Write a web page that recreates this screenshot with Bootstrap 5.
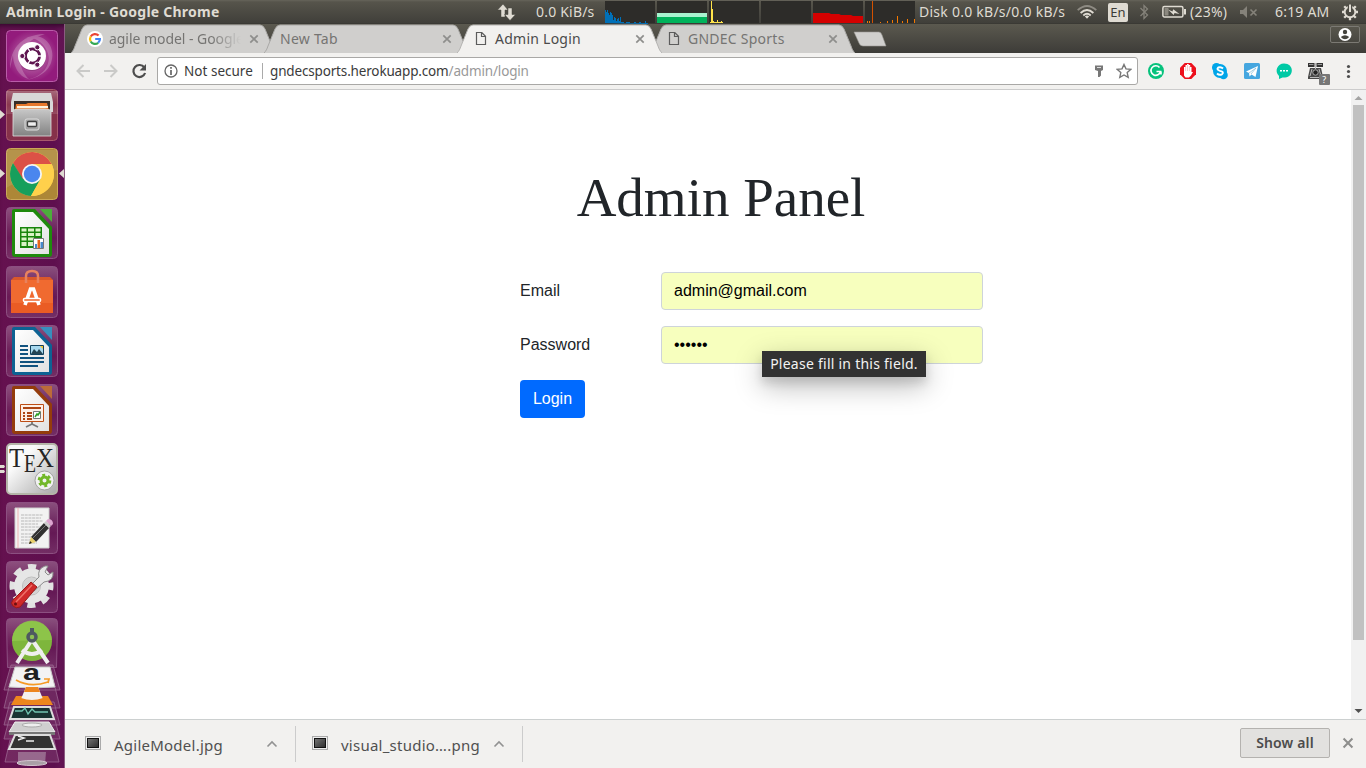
<!DOCTYPE html>
<html lang="en">
<head>
<meta charset="utf-8">
<meta name="viewport" content="width=device-width, initial-scale=1">
<title>Admin Login</title>
<link href="https://cdn.jsdelivr.net/npm/bootstrap@5.3.0/dist/css/bootstrap.min.css" rel="stylesheet">
<style>
body{font-family:"Noto Sans","Open Sans",sans-serif;font-size:14px;line-height:1;height:768px;width:1366px;background:#fff}
svg{display:block;flex:none}
.topbar{height:24px;background:linear-gradient(#66645a 0,#56544b 2px,#403f3a 23px,#35342f);color:#dfdbd2;padding-left:6px;white-space:nowrap}
.topbar>*{flex:none}
.topbar span{line-height:24px;height:24px}
.wtitle{width:491px;font-weight:700;font-size:14px;letter-spacing:.24px}
.rate{width:68px;margin-left:20px;font-size:14px;letter-spacing:.2px}
.disk{width:158px;margin-left:4px;font-size:14px;letter-spacing:.25px}
.topbar .lang{width:20px;height:19px;line-height:19px;margin:0 0 0 11px;background:#dfdbd2;color:#3c3b37;border-radius:2px;font-size:13px;text-align:center}
.launcher{width:65px;background:linear-gradient(90deg,#65114f,#5e0f4e 85%,#651656);border-right:1px solid #8b5b81;padding:6px 0 0 6px;box-shadow:inset 0 5px 5px -3px #35082d;gap:7px}
.tabstrip{height:29px;background:linear-gradient(#5b594f,#3d3c38);padding-left:6px}
.ctab{width:205px;margin-right:-12px;height:29px;flex:none;color:#757472}
.ctab .shape{position:absolute;left:0;top:0}
.ctab .inner{position:relative;height:29px;padding:0 17px 0 16px}
.ctab .lbl{line-height:28px;font-size:14px;letter-spacing:.25px;white-space:nowrap}
.ctab .fade-r{margin-left:6px;width:136px;letter-spacing:-.05px;-webkit-mask-image:linear-gradient(90deg,#000 75%,transparent 97%);mask-image:linear-gradient(90deg,#000 75%,transparent 97%)}
.toolbar{height:37px;background:#f2f1ef;border-bottom:1px solid #ccc;padding:4px 0 0 11px}
.omni{width:981px;height:28px;border:1px solid #a9a8a6;border-radius:3px;background:#fff;font-size:13.5px;color:#3b3b3b}
.omni span{line-height:26px;white-space:nowrap}
.viewport{height:629px}
.content{width:1286px;background:#fff;font-family:"Liberation Sans",Arial,sans-serif;font-size:16px;color:#212529}
.heading{font-family:"Liberation Serif",serif;font-size:55px;line-height:67px;margin:74px 0 41px;padding-left:26px;font-weight:400;color:#212529;width:1286px}
.login{width:463px;margin-left:455px}
.login .form-label{width:141px;margin:0;line-height:38px}
.login .form-control{width:322px;height:38px;border:1px solid #ced4da;border-radius:4px;background:#f7ffbe;color:#000;padding:6px 12px;line-height:24px}
.login .btn{width:65px;height:38px;background:#006aff;border:0;border-radius:4px;padding:0;font-size:16px;color:#fff}
.tip{left:101px;top:25px;width:164px;height:26px;line-height:26px;background:#323232;color:#f3f3f3;font-family:"Noto Sans",sans-serif;font-size:14px;letter-spacing:.25px;text-align:center;box-shadow:0 9px 28px rgba(0,0,0,.28),0 6px 10px rgba(0,0,0,.12);white-space:nowrap}
.sbar{width:15px;background:#f1f1f1}
.sthumb{width:11px;height:535px;background:#c1c1c1}
.downloads{height:49px;background:#f2f1ef;border-top:1px solid #ccd0d0;color:#505050;font-size:15px}
.ditem{width:227px;height:36px;border-right:1px solid #ccc;padding-left:16px}
.dname{font-size:15px;line-height:22px;white-space:nowrap;padding-top:1px;margin-left:13px;width:152px;letter-spacing:.24px}
.showall{width:90px;height:30px;border:1px solid #b4b2af;border-radius:2px;background:#e2e1df;color:#4c4c4c;font-weight:600;font-size:14px;padding:0;letter-spacing:.17px}
</style>
</head>
<body class="d-flex flex-column overflow-hidden">
<svg width="0" height="0" class="position-absolute">
<defs>
<linearGradient id="tile" x2="0" y2="1"><stop stop-color="#fff" stop-opacity=".27"/><stop offset=".45" stop-color="#fff" stop-opacity=".08"/><stop offset=".6" stop-color="#fff" stop-opacity=".04"/><stop offset="1" stop-color="#fff" stop-opacity=".13"/></linearGradient>
<linearGradient id="metal" x2="0" y2="1"><stop stop-color="#c8c8c8"/><stop offset="1" stop-color="#828282"/></linearGradient>
<linearGradient id="paper" x2="1" y2="1"><stop stop-color="#fff"/><stop offset="1" stop-color="#e2e2e2"/></linearGradient>
<linearGradient id="texbg" x2="1" y2="1"><stop offset=".3" stop-color="#fafafa"/><stop offset="1" stop-color="#a8a8a8"/></linearGradient>
<linearGradient id="shot" x2="1" y2="1"><stop stop-color="#777"/><stop offset="1" stop-color="#2b2b2b"/></linearGradient>
<radialGradient id="ubu"><stop stop-color="#c583b7"/><stop offset="1" stop-color="#931b7c"/></radialGradient>
<symbol id="xx" viewBox="0 0 10 10"><path d="M1.300 1.300l7.400 7.400M8.700 1.300L1.300 8.700" stroke="#8e8e8c" stroke-width="1.700" fill="none"/></symbol>
<symbol id="doc" viewBox="0 0 12 15"><path d="M1.500 1.500h5.300l3.700 3.800v8.200h-9zM6.500 1.500v4h4" fill="none" stroke="#5c5c5c" stroke-width="1.200"/></symbol>
</defs>
</svg>

<header class="topbar d-flex align-items-center">
<span class="wtitle">Admin Login - Google Chrome</span>
<svg width="19" height="18" viewBox="0 0 19 18"><path d="M6 1L.5 7H4v7h4V7h3zM13 17.500l5.500-6H15V5h-4v6.500H7.500z" fill="#dfdbd2" stroke="#45443e" stroke-width=".5"/></svg>
<span class="rate">0.0 KiB/s</span>
<svg width="311" height="24" viewBox="-1 0 311 24">
<g fill="#2d2c29"><path d="M0 1h50v22H0zM52 1h50v22H52zM104 1h50v22h-50zM156 1h50v22h-50zM208 1h50v22h-50zM260 1h50v22h-50z"/></g>
<path d="M0 23V10h1v2h1v-2h1v3h1v2h1v-3h1v1h1v2h1v5h1v-3h1v1h1v3h1v-2h1v-1h1v3h1v-4h1v5h3v1h2v-1h4v1h4v-1h2v1h3v-1h2v1h4v-2h1v2h2v1z" fill="#0070b8"/>
<path d="M52 13h50v4H52z" fill="#a7f3cf"/><path d="M52 17h50v6H52z" fill="#00b25b"/>
<path d="M105 23v-1h1V1h1v8h1v12h1v1h3v-2h1v2h3v-1h1v1h1v1z" fill="#ffe34a"/>
<path d="M208 13h16l2 1h8l2 1h10l2 1h10v7h-50z" fill="#d40000"/>
<path d="M267 1h1v22h-1z" fill="#d35100"/><path d="M262 21h1v2h-1zM264 21h1v2h-1zM275 22h1v1h-1zM282 21h1v2h-1zM287 20h1v3h-1zM292 16h1v7h-1zM297 21h1v2h-1zM302 19h1v4h-1zM309 19h1v4h-1z" fill="#f57900"/>
</svg>
<span class="disk">Disk 0.0 kB/s/0.0 kB/s</span>
<svg width="20" height="14" viewBox="0 0 20 14"><g fill="none" stroke-width="1.800"><path d="M.7 5.200Q10-3.300 19.300 5.200" stroke="#8e8b83"/><path d="M3.600 8Q10 2 16.400 8M6.300 10.500q3.700-3.400 7.400 0" stroke="#dfdbd2"/></g><path d="M7.800 11.300L10 13.800l2.200-2.500Q10 9.500 7.800 11.300z" fill="#dfdbd2"/></svg>
<span class="lang">En</span>
<svg class="ms-2" width="16" height="18" viewBox="-2 0 16 18"><path d="M2.500 5l7 7-3.500 3.500v-13L9.500 6l-7 7" fill="none" stroke="#85827a" stroke-width="1.300"/></svg>
<svg style="margin-left:10px" width="25" height="14" viewBox="0 0 25 14"><rect x=".9" y="1.500" width="20" height="10.500" rx="1.500" fill="none" stroke="#dfdbd2" stroke-width="1.500"/><path d="M22 4h2v5.500h-2z" fill="#dfdbd2"/><path d="M2.500 3h4v7.500h-4z" fill="#8b887f"/><path d="M6 4.500l4.500 2 .7-2.300L17.500 9l-5-1-.8 2z" fill="#dfdbd2"/></svg>
<span style="margin-left:3px;width:50px;letter-spacing:.25px">(23%)</span>
<svg width="18" height="12" viewBox="0 0 18 12"><path d="M0 4h3l4-4v12L3 8H0z" fill="#85827a"/><path d="M10.500 3.500l6 6m0-6l-6 6" stroke="#85827a" stroke-width="1.600"/></svg>
<span style="margin-left:17px;width:66px;letter-spacing:.2px">6:19 AM</span>
<svg width="18" height="18" viewBox="0 0 18 18"><circle cx="9" cy="9" r="5.300" fill="none" stroke="#dfdbd2" stroke-width="1.900"/><g stroke="#dfdbd2" stroke-width="2.300"><path d="M9 14v3.200M1 9H4M14 9h3M3.200 3.200l2.100 2.100M14.800 3.200l-2.100 2.100M3.200 14.800l2.100-2.100M14.800 14.800l-2.100-2.100"/></g><path d="M6.800 1h4.400v7H6.800z" fill="#4e4c45"/><path d="M8 1.500h2V9H8z" fill="#dfdbd2"/></svg>
</header>

<div class="d-flex flex-grow-1">
<nav class="launcher position-relative d-flex flex-column flex-shrink-0">
<svg width="52" height="52" viewBox="0 0 52 52"><rect x=".5" y=".5" width="51" height="51" rx="4" fill="url(#ubu)" stroke="#b95ca9"/><path d="M4 39C4 10 26 4 39 4 28 7 12 17 14 31c1 8 5 15 9 18C12 47 7 34 7 25M20 8c18-8 31 10 25 25-5 13-21 17-27 17 19-2 29-16 23-29C36 10 26 7 20 8z" fill="#fff" opacity=".22"/><circle cx="26" cy="27" r="14" fill="#4b0940" opacity=".25"/><circle cx="26" cy="26" r="14" fill="#fff"/><circle cx="26.500" cy="26" r="7" fill="none" stroke="#5e1550" stroke-width="3"/><path d="M26.500 26h9M26.500 26l-4.500-7.800M26.500 26l-4.500 7.800" stroke="#fff" stroke-width="1.300"/><circle cx="26.500" cy="26" r="5.400" fill="#fff"/><g fill="#5e1550" stroke="#fff"><circle cx="16.300" cy="26" r="2.600"/><circle cx="31.300" cy="17.300" r="2.600"/><circle cx="31.300" cy="34.700" r="2.600"/></g></svg>

<svg width="52" height="52" viewBox="0 0 52 52"><rect x=".5" y=".5" width="51" height="51" rx="4" fill="#86314a" stroke="#a8596c"/><path d="M0 2h52v23H0z" fill="url(#tile)"/><path d="M7 4h38l2 9v10H5V13z" fill="#d8d8d8"/><path d="M8 12h36v11H8z" fill="#382e28"/><path d="M10 15h10l2-1h19l2 8H9z" fill="#e8782c"/><path d="M11 17h31v2H11z" fill="#fff3df"/><path d="M7 21l5-1h27l6 1v26H7z" fill="url(#metal)" stroke="#e2e2e2" stroke-width=".8"/><rect x="19" y="30" width="14" height="11" rx="2" fill="#a2a2a2" stroke="#ddd"/><rect x="21.500" y="32.500" width="9" height="5" rx="1" fill="#eee" stroke="#404040" stroke-width="1.300"/></svg>

<svg width="52" height="52" viewBox="0 0 52 52"><rect x=".5" y=".5" width="51" height="51" rx="4" fill="#ad8737" stroke="#caa859"/><path d="M0 2h52v20Q25 24 0 40z" fill="#fff" opacity=".1"/><circle cx="26" cy="26" r="22" fill="#ffd04b"/><path d="M26 16h19.600A22 22 0 0 0 7 15l9.500 16.500L26 26z" fill="#dc5146"/><path d="M7 15a22 22 0 0 0 18 33l9.500-17L26 26l-9 5z" fill="#169f5c"/><path d="M26 16h19.600a22 22 0 0 1-20.600 32l9.700-17z" fill="#ffd04b"/><circle cx="26" cy="26" r="10" fill="#f5f5f5"/><circle cx="26" cy="26" r="8.200" fill="#4a86ee"/></svg>

<svg width="52" height="52" viewBox="0 0 52 52"><rect x=".5" y=".5" width="51" height="51" rx="4" fill="url(#tile)" stroke="#8c4f81"/><path d="M8 2h21l17 18v27q0 3-3 3H9q-3 0-3-3V4q0-2 2-2z" fill="#1f8a0d"/><path d="M9 5h18l16 17v25H9z" fill="url(#paper)"/><path d="M34 2h12v13z" fill="#4cae3b"/><path d="M14 20h22v21H14z" fill="#18850c"/><g fill="#d9f3c6"><path d="M15.500 21.500h5v3h-5zM22 21.500h6v3h-6zM29.500 21.500h5v3h-5zM15.500 26h5v3h-5zM22 26h6v3h-6zM29.500 26h5v3h-5zM15.500 30.500h5v3h-5zM22 30.500h6v3h-6zM15.500 35h5v4h-5zM22 35h5v4h-5z"/></g><path d="M27.500 31.500h10v10h-10z" fill="#fff" stroke="#777"/><path d="M29 37h2v4h-2z" fill="#4889cb"/><path d="M31.500 33h2.500v8h-2.500z" fill="#e8641b"/><path d="M34.500 35H37v6h-2.500z" fill="#4889cb"/></svg>

<svg width="52" height="52" viewBox="0 0 52 52"><rect x=".5" y=".5" width="51" height="51" rx="4" fill="url(#tile)" stroke="#8c4f81"/><path d="M5 14h42v33H5z" fill="#f06a30"/><path d="M5 37h42v10H5z" fill="#ea5c24"/><path d="M5 14l3-3h36l3 3z" fill="#d9582b"/><path d="M20 17v-7q0-5 6-5t6 5v7" fill="none" stroke="#e8825e" stroke-width="2.500"/><path d="M19 39l5.500-16h3L33 39" fill="none" stroke="#fff" stroke-width="3.600"/><rect x="17.500" y="32.500" width="17" height="3" rx="1" fill="#ee652d" stroke="#fff" stroke-width="1.500"/></svg>

<svg width="52" height="52" viewBox="0 0 52 52"><rect x=".5" y=".5" width="51" height="51" rx="4" fill="url(#tile)" stroke="#8c4f81"/><path d="M8 2h21l17 18v27q0 3-3 3H9q-3 0-3-3V4q0-2 2-2z" fill="#0d6293"/><path d="M9 5h18l16 17v25H9z" fill="url(#paper)"/><path d="M34 2h12v13z" fill="#388fbd"/><path d="M14 21h8m-8 4h8m-8 4h8m-8 4h24m-24 4h24m-24 4h18" stroke="#12537f" stroke-width="2"/><path d="M24.500 20.500h13v9h-13z" fill="#a7d8ee" stroke="#12415d"/><path d="M25 29l3-5 3 3 2-3 4 5z" fill="#244454"/><path d="M34 21h3v3z" fill="#f4c32d"/></svg>

<svg width="52" height="52" viewBox="0 0 52 52"><rect x=".5" y=".5" width="51" height="51" rx="4" fill="url(#tile)" stroke="#8c4f81"/><path d="M8 2h21l17 18v27q0 3-3 3H9q-3 0-3-3V4q0-2 2-2z" fill="#943c0c"/><path d="M9 5h18l16 17v25H9z" fill="url(#paper)"/><path d="M34 2h12v13z" fill="#bc6b39"/><path d="M14.500 20.500h23v17h-23z" fill="#fdf0e7" stroke="#bd4e15"/><path d="M17 24h18M21 29h5m-5 3h5m-5 3h5m-9-6h2m-2 3h2m-2 3h2" stroke="#ad4615" stroke-width="2"/><path d="M27.500 27.500h7v7h-7z" fill="#fff" stroke="#777"/><path d="M29 33l2-3 1 1 2-3" fill="none" stroke="#2e9e25" stroke-width="1.500"/><path d="M26 38v2l-6 3m6-3l6 3" fill="none" stroke="#777" stroke-width="1.800"/></svg>

<svg width="52" height="52" viewBox="0 0 52 52"><rect x="1" y="1" width="50" height="50" rx="4" fill="url(#texbg)" stroke="#b4b5a8" stroke-width="2"/><g font-family="Liberation Serif,serif" font-size="27" fill="#252525"><text x="3" y="24" textLength="15" lengthAdjust="spacingAndGlyphs">T</text><text x="18" y="29" font-size="26" textLength="12" lengthAdjust="spacingAndGlyphs">E</text><text x="30" y="24" textLength="18" lengthAdjust="spacingAndGlyphs">X</text></g><circle cx="38.500" cy="37.500" r="9.500" fill="#f1f1f1" stroke="#a3a3a3"/><circle cx="38.500" cy="37.500" r="5.600" fill="none" stroke="#72b829" stroke-width="2.500" stroke-dasharray="2.900 2.964"/><circle cx="38.500" cy="37.500" r="3.500" fill="none" stroke="#72b829" stroke-width="3"/></svg>

<svg width="52" height="52" viewBox="0 0 52 52"><rect x=".5" y=".5" width="51" height="51" rx="4" fill="url(#tile)" stroke="#8c4f81"/><path d="M9 6h34v40H9z" fill="#f2f2f2" stroke="#cfcfcf"/><path d="M12 6v40" stroke="#efb4b4"/><path d="M15 13h22m-22 3h20m-20 3h22m-22 3h17m-17 3h21m-21 3h15m-15 4h17m-17 3h13m-13 3h13m-13 3h16" stroke="#aaa" stroke-width=".8" stroke-dasharray="3 .7"/><path d="M25 35l13-14 5 5-13 14z" fill="#303030"/><path d="M27 36l13-13" stroke="#777"/><path d="M25 35l5 5-7 2z" fill="#e8cf6a"/><path d="M23 42l1-3 2 2z" fill="#222"/><path d="M38 21l2-2 5 5-2 2z" fill="#ccc"/><path d="M40 19l2-2q5 0 5 5l-2 2z" fill="#dda5d0"/></svg>

<svg width="52" height="52" viewBox="0 0 52 52"><rect x=".5" y=".5" width="51" height="51" rx="4" fill="url(#tile)" stroke="#8c4f81"/><circle cx="25.500" cy="25" r="19" fill="none" stroke="#e2e2e2" stroke-width="6" stroke-dasharray="8 6.920" stroke-dashoffset="4"/><circle cx="25.500" cy="25" r="13" fill="#d4d4d4" stroke="#e6e6e6" stroke-width="9"/><circle cx="25.500" cy="25" r="9" fill="none" stroke="#bdbdbd"/><path d="M24 25l9-9Q31 8 39 5l3 0-3 6 3 3 5-3q1 9-9 10L28 30z" fill="#e7e7e7" stroke="#8d8d8d"/><path d="M7 39L25 21l6 5-17 20q-4 2-7-1t0-6z" stroke="#9b1a1a" fill="#d02a2a"/><path d="M10 41l16-17" stroke="#ee7068" stroke-width="1.500"/><circle cx="9.500" cy="43" r="1.500" fill="#6a1010"/></svg>

<svg class="position-absolute" style="left:0;top:594px" width="64" height="150" viewBox="0 618 64 150">
<path d="M10.500 618.500h43q4 0 4 4l-1 45h-49l-1-45q0-4 4-4z" fill="url(#tile)" stroke="#8c4f81"/>
<circle cx="32" cy="641" r="20" fill="#7eb63c"/><path d="M12 641a20 20 0 0 1 40-1z" fill="#97cd51" opacity=".6"/>
<path d="M31 641L17 663m16-22l15 22M22 650q10 8 20 0" fill="none" stroke="#efefef" stroke-width="4"/><circle cx="32" cy="637" r="4" fill="#8dbd55" stroke="#4e5960" stroke-width="3.500"/><path d="M30 628h4v5h-4z" fill="#4e5960"/>
<g fill="#fff" fill-opacity=".1" stroke="#9a6690" stroke-width=".8"><path d="M11 665h42l7 25H4zM10 683h44l6 25H4zM10 702h44l6 23H4zM9 720h46l5 19H4zM10 740h44l5 22H5z"/></g>
<path d="M15 667h35l5 20q-23 2-46 0z" fill="#f3f3f3" stroke="#c7c7c7"/><text x="23" y="680" font-family="Liberation Sans,sans-serif" font-weight="700" font-size="22" textLength="17" lengthAdjust="spacingAndGlyphs" fill="#202020">a</text><path d="M16 680q14 8 32 2l1-3m-5 0h5l-1 4" fill="none" stroke="#f59a25" stroke-width="1.700"/>
<path d="M16 696h32l5 9H11z" fill="#ed861d"/><path d="M26 687h12l5 12q-11 5-22 0z" fill="#f4f1ed"/><path d="M26 687h12l2 5H24zM21 698q11 4 22 0l1 3q-11 5-24 0z" fill="#ed861d"/>
<path d="M14 707h36l4 12H10z" fill="#183331" stroke="#ddd" stroke-width="2"/><path d="M15 711h7l3-3 3 6 4-5 3 3h13" fill="none" stroke="#71c5b1" stroke-width="1.300"/>
<path d="M15 722h34l6 10H9z" fill="#cfcfcf" stroke="#eee"/><ellipse cx="32" cy="725" rx="10" ry="2" fill="#eee" stroke="#aaa"/><path d="M9 732h46v3H9z" fill="#777"/>
<path d="M15 735h35l5 14H9z" fill="#333" stroke="#ddd" stroke-width="2"/><path d="M18 736l6 2-6 2m8 1h8" stroke="#eee" fill="none" stroke-width="1.500"/>
<path d="M18 752h28l-1 12H18z" fill="#bda9b9" opacity=".5"/><ellipse cx="32" cy="763" rx="15" ry="2.500" fill="#aaa0a7" stroke="#d4c6d0"/>
</svg>
<svg class="position-absolute" style="left:0;top:0" width="64" height="470" viewBox="0 24 64 470"><path d="M0 110l5 4.500-5 4.500zM0 169l5 4.500-5 4.500zM64 169l-5 4.500 5 4.500zM0 465h4l1 1.500-1 1.500H0zM0 470h4l1 1.500-1 1.500H0z" fill="#dfdbd2"/></svg>
</nav>

<div class="flex-grow-1 d-flex flex-column">
<div class="tabstrip d-flex position-relative">
<div class="ctab position-relative"><svg class="shape" width="205" height="29"><path d="M0 29C2 27 3 25 4 22L11 5Q13 1 16 1H189Q192 1 194 5L201 22C202 25 203 27 205 29" fill="#d0cfcd" stroke="#aaa9a7"/></svg>
<div class="inner d-flex align-items-center"><svg width="16" height="16" viewBox="0 0 16 16"><circle cx="8" cy="8" r="8" fill="#fff"/><g fill="none" stroke-width="2.200"><path d="M11.600 4.600A5 5 0 0 0 3.700 5.500" stroke="#ea4335"/><path d="M3.700 5.500a5 5 0 0 0 0 5" stroke="#fbbc05"/><path d="M3.700 10.500a5 5 0 0 0 7.500 1.300" stroke="#34a853"/><path d="M11.200 11.800Q13 10 12.900 8H8.200" stroke="#4285f4"/></g></svg><span class="lbl fade-r">agile model - Google</span><svg class="ms-auto" width="10" height="10"><use href="#xx"/></svg></div></div>
<div class="ctab position-relative"><svg class="shape" width="205" height="29"><path d="M0 29C2 27 3 25 4 22L11 5Q13 1 16 1H189Q192 1 194 5L201 22C202 25 203 27 205 29" fill="#d0cfcd" stroke="#aaa9a7"/></svg><div class="inner d-flex align-items-center"><span class="lbl">New Tab</span><svg class="ms-auto" width="10" height="10"><use href="#xx"/></svg></div></div>
<div class="ctab position-relative z-2" style="color:#4b4b4b"><svg class="shape" width="205" height="29"><path d="M0 29C2 27 3 25 4 22L11 5Q13 1 16 1H189Q192 1 194 5L201 22C202 25 203 27 205 29" fill="#f2f1ef" stroke="#b5b4b2"/><path d="M1 28.500h203" stroke="#f2f1ef"/></svg><div class="inner d-flex align-items-center"><svg width="12" height="15" style="margin-left:2px"><use href="#doc"/></svg><span class="lbl" style="margin-left:8px">Admin Login</span><svg class="ms-auto" width="10" height="10"><use href="#xx"/></svg></div></div>
<div class="ctab position-relative"><svg class="shape" width="205" height="29"><path d="M0 29C2 27 3 25 4 22L11 5Q13 1 16 1H189Q192 1 194 5L201 22C202 25 203 27 205 29" fill="#d0cfcd" stroke="#aaa9a7"/></svg><div class="inner d-flex align-items-center"><svg width="12" height="15" style="margin-left:2px"><use href="#doc"/></svg><span class="lbl" style="margin-left:8px">GNDEC Sports</span><svg class="ms-auto" width="10" height="10"><use href="#xx"/></svg></div></div>
<svg width="34" height="16" style="margin:7px 0 0 10px"><path d="M1 1h25q2 0 3 3l4 11H10q-3 0-4-3z" fill="#d0cfcd" stroke="#9b9993" stroke-width=".6"/></svg>
<svg class="ms-auto" width="30" height="17" style="margin:2px 6px 0 0"><rect x=".5" y=".5" width="29" height="16" rx="1.500" fill="none" stroke="#7b7973"/><circle cx="15" cy="8.500" r="6.500" fill="#fff"/><circle cx="15" cy="6" r="2.200" fill="#44433d"/><path d="M10.800 11q4.200-3.500 8.400 0-4.200 4.500-8.400 0z" fill="#44433d"/></svg>
</div>

<div class="toolbar d-flex">
<svg width="81" height="28" viewBox="76 57 81 28"><path d="M90 71H78m5.500-6L77.500 71l6 6M104 71h12m-5.500-6l6 6-6 6" fill="none" stroke="#cacac8" stroke-width="2"/><path d="M144.300 67.500a6 6 0 1 0 .8 5.500" fill="none" stroke="#4d4d4d" stroke-width="2.200"/><path d="M146 64v6.500h-6.500z" fill="#4d4d4d"/></svg>
<div class="omni d-flex align-items-center">
<svg width="14" height="14" style="margin-left:6px"><circle cx="7" cy="7" r="6" fill="none" stroke="#666" stroke-width="1.300"/><path d="M7 6v5M7 3v1.700" stroke="#666" stroke-width="1.700"/></svg>
<span style="width:78px;margin-left:6px;letter-spacing:.02px">Not secure</span><i style="width:1px;height:16px;background:#aaa"></i>
<span style="margin-left:7px;letter-spacing:-.16px">gndecsports.herokuapp.com<span style="color:#999">/admin/login</span></span>
<svg class="ms-auto" width="10" height="14"><path d="M1 1.500h8v4.500l-2 1v4.500l-1.500 1.500H4V7L1 6z" fill="#777"/><path d="M3 3.500h4" stroke="#ddd"/></svg>
<svg width="16" height="16" style="margin:0 5px 0 12px"><path d="M8 1.500l2 4.400 4.700.5-3.500 3.200 1 4.800L8 12l-4.200 2.400 1-4.800L1.300 6.400 6 5.900z" fill="none" stroke="#777" stroke-width="1.400"/></svg>
</div>
<svg width="227" height="30" viewBox="1138 57 227 30"><circle cx="1156" cy="71" r="8" fill="#06c27c"/><path d="M1159.500 67.500a4.800 4.800 0 1 0 1 4h-4m4.500 0v3" fill="none" stroke="#fff" stroke-width="1.600"/><path d="M1184.700 63h6.600l4.700 4.700v6.600l-4.700 4.700h-6.600l-4.700-4.700v-6.600z" fill="#ed101c"/><path d="M1184 67h1.500v-2h1.500v-1h1.700v1h1.500v2h1.300v5h1.500l-2 3.500-2 2h-3.500l-1.500-2z" fill="#fff"/><path d="M1185.600 66v5m1.900-6v6m1.900-5v5" stroke="#eb9a9a" stroke-width=".5"/><circle cx="1220" cy="71" r="7" fill="#00a5e8"/><circle cx="1216.500" cy="67.500" r="4.500" fill="#00a5e8"/><circle cx="1223.500" cy="75" r="4.300" fill="#00a5e8"/><path d="M1223 68.500q-2-2-4.700-1-2.300 2 1.700 3.300 4.600 1.300 2 3.500-2.800 1.200-5-.8" stroke="#fff" fill="none" stroke-width="1.900"/><rect x="1244" y="63" width="16" height="16" rx="1.500" fill="#45a6df"/><path d="M1246 71.500l12-5.500-2.500 11-4-2.500-2 2-.5-3.500z" fill="#fff"/><path d="M1249 73l7-5-5 6" fill="none" stroke="#8bbbd4" stroke-width=".7"/><path d="M1284 63.500c10.300 0 10.300 13.500 1 14h-2.500l-3.500 1.500v-3c-5-5-1.500-12.500 5-12.500z" fill="#00c9a5"/><path d="M1280 70h2v1.500h-2zm3 0h2v1.500h-2zm3 0h2v1.500h-2z" fill="#fff"/><path d="M1308 63h6.500v4h-6.500zm8.500 0h6.500v4h-6.500z" fill="#333"/><path d="M1309 64.500h4.500m4 0h4.500" stroke="#999"/><path d="M1310 68h11l2 9v2h-15v-2z" fill="#4a4a4a"/><path d="M1312 69l-2 7m9-7l2 7M1315.500 63v6M1310 77.500h11" stroke="#bbb"/><circle cx="1315.500" cy="72.500" r="2.700" fill="#222" stroke="#aaa"/><rect x="1319" y="74" width="11" height="11" rx="1" fill="#777"/><text x="1322.300" y="83" font-family="Noto Sans,sans-serif" font-size="9" fill="#fff">?</text><g fill="#4d4d4d"><circle cx="1348.500" cy="66.500" r="1.600"/><circle cx="1348.500" cy="71.500" r="1.600"/><circle cx="1348.500" cy="76.500" r="1.600"/></g></svg>
</div>

<div class="viewport d-flex">
<main class="content">
<h1 class="heading text-center">Admin Panel</h1>
<form class="login">
<div class="d-flex mb-3"><label class="form-label" for="email">Email</label><input class="form-control" id="email" type="text" value="admin@gmail.com"></div>
<div class="d-flex mb-3"><label class="form-label" for="pw">Password</label><div class="position-relative"><input class="form-control" id="pw" type="password" value="secret"><div class="tip position-absolute">Please fill in this field.</div></div></div>
<button class="btn btn-primary" type="button">Login</button>
</form>
</main>
<div class="sbar d-flex flex-column align-items-center justify-content-between">
<svg width="15" height="15"><path d="M3.500 10h8l-4-4z" fill="#a3a3a3"/></svg><div class="sthumb mb-auto"></div><svg width="15" height="15"><path d="M3.500 5h8l-4 4z" fill="#505050"/></svg>
</div>
</div>

<footer class="downloads d-flex">
<div class="d-flex" style="margin:6px 0 0 4px">
<div class="ditem d-flex align-items-center"><svg width="16" height="14" style="margin-top:-3px"><rect x=".5" y=".5" width="15" height="13" fill="#eee" stroke="#aaa"/><rect x="2.500" y="2.500" width="11" height="9" fill="url(#shot)" stroke="#111"/></svg><span class="dname">AgileModel.jpg</span><svg width="12" height="8"><path d="M1.500 6.500L6 2l4.500 4.500" fill="none" stroke="#929292" stroke-width="1.600"/></svg></div>
<div class="ditem d-flex align-items-center"><svg width="16" height="14" style="margin-top:-3px"><rect x=".5" y=".5" width="15" height="13" fill="#eee" stroke="#aaa"/><rect x="2.500" y="2.500" width="11" height="9" fill="url(#shot)" stroke="#111"/></svg><span class="dname">visual_studio….png</span><svg width="12" height="8"><path d="M1.500 6.500L6 2l4.500 4.500" fill="none" stroke="#929292" stroke-width="1.600"/></svg></div>
</div>
<div class="ms-auto d-flex align-items-start" style="padding:8px 12px 0 0"><button class="showall">Show all</button><svg width="12" height="12" style="margin:9px 0 0 12px"><use href="#xx"/></svg></div>
</footer>
</div>
</div>
<script src="https://cdn.jsdelivr.net/npm/bootstrap@5.3.0/dist/js/bootstrap.bundle.min.js"></script>
</body>
</html>
